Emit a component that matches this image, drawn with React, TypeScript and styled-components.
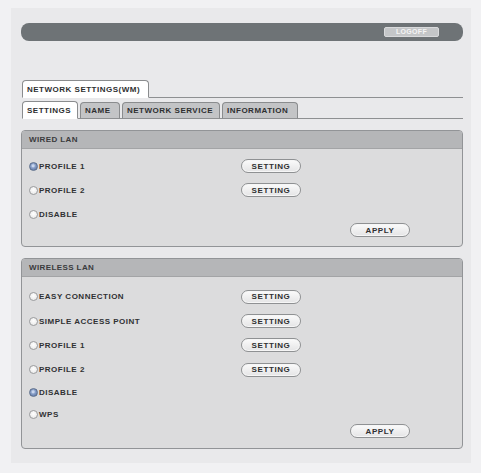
import React, { useState } from 'react'
import styled, { createGlobalStyle } from 'styled-components'

const GlobalStyle = createGlobalStyle`
  html, body {
    margin: 0;
    padding: 0;
    background: #f1f1f3;
  }
  body {
    font-family: "Liberation Sans", Arial, sans-serif;
  }
`

const Frame = styled.div`
  box-sizing: border-box;
  width: 481px;
  height: 473px;
  padding: 8px 10px 10px 11px;
`

const Page = styled.div`
  box-sizing: border-box;
  height: 100%;
  background: #e9e9eb;
  padding: 15px 8px 0 10px;
`

const TopBar = styled.div`
  height: 18px;
  border-radius: 8px;
  background: #6e7376;
  display: flex;
  align-items: center;
  justify-content: flex-end;
  padding-right: 24px;
`

const LogoffButton = styled.button`
  width: 55px;
  height: 10px;
  border: 1px solid #d9dadc;
  border-radius: 2px;
  background: #c4c6c8;
  color: #f4f4f4;
  font: bold 7px "Liberation Sans", Arial, sans-serif;
  letter-spacing: 0.3px;
  padding: 0;
  line-height: 8px;
`

const TabRow = styled.div<{ $top: number }>`
  display: flex;
  align-items: flex-end;
  margin-top: ${(p) => p.$top}px;
  margin-left: 1px;
  border-bottom: 1px solid #8e9092;
  height: 18px;
`

const Tab = styled.div<{ $active?: boolean; $width: number }>`
  box-sizing: border-box;
  width: ${(p) => p.$width}px;
  height: ${(p) => (p.$active ? 18 : 17)}px;
  margin-right: 2px;
  margin-bottom: -1px;
  border: 1px solid #8a8c8e;
  border-bottom: ${(p) => (p.$active ? '1px solid #ffffff' : '1px solid #8e9092')};
  border-radius: 4px 4px 0 0;
  background: ${(p) => (p.$active ? '#ffffff' : '#c3c4c6')};
  color: #2e2f31;
  font-size: 8px;
  font-weight: bold;
  letter-spacing: 0.5px;
  display: flex;
  align-items: center;
  padding-left: 4px;
  white-space: nowrap;
  overflow: hidden;
`

const Panel = styled.div<{ $top: number; $height: number }>`
  box-sizing: border-box;
  margin-top: ${(p) => p.$top}px;
  height: ${(p) => p.$height}px;
  border: 1px solid #929497;
  border-radius: 4px;
  background: #dcdcdd;
  overflow: hidden;
  display: flex;
  flex-direction: column;
`

const PanelHeader = styled.div`
  height: 17px;
  background: #b5b6b8;
  border-bottom: 1px solid #a3a4a6;
  color: #3a3b3d;
  font-size: 8px;
  font-weight: bold;
  letter-spacing: 0.4px;
  display: flex;
  align-items: center;
  padding-left: 7px;
`

const PanelBody = styled.div<{ $pad: number }>`
  position: relative;
  flex: 1;
  padding-top: ${(p) => p.$pad}px;
`

const OptionRow = styled.div<{ $height: number }>`
  display: grid;
  grid-template-columns: 212px 60px;
  align-items: center;
  height: ${(p) => p.$height}px;
  padding-left: 7px;
`

const RadioLabel = styled.label`
  display: flex;
  align-items: center;
  gap: 1px;
  color: #303133;
  font-size: 8px;
  font-weight: bold;
  letter-spacing: 0.5px;
  white-space: nowrap;
  cursor: pointer;
`

const RadioDot = styled.span<{ $checked: boolean }>`
  box-sizing: border-box;
  width: 9px;
  height: 9px;
  border-radius: 50%;
  border: 1px solid ${(p) => (p.$checked ? '#5d6f8c' : '#9a9b9d')};
  background: ${(p) =>
    p.$checked
      ? 'radial-gradient(circle at 45% 40%, #c9d6ee 0 1px, #8ea4cb 2px, #6a82b0 4px)'
      : 'radial-gradient(circle at 50% 40%, #ffffff, #e4e4e4)'};
  display: inline-block;
`

const PillButton = styled.button<{ $width?: number }>`
  box-sizing: border-box;
  width: ${(p) => p.$width ?? 60}px;
  height: 14px;
  border: 1px solid #8f9193;
  border-radius: 7px;
  background: linear-gradient(#fbfbfb, #e4e4e5);
  box-shadow: inset 0 0 0 1px #f6f6f6;
  color: #2f3032;
  font: bold 8px "Liberation Sans", Arial, sans-serif;
  letter-spacing: 0.6px;
  padding: 0;
  cursor: pointer;
`

const ApplyWrap = styled.div<{ $bottom: number }>`
  position: absolute;
  right: 52px;
  bottom: ${(p) => p.$bottom}px;
`

type Option = { label: string; setting?: boolean; rowHeight: number }

const wiredOptions: Option[] = [
  { label: 'PROFILE 1', setting: true, rowHeight: 24 },
  { label: 'PROFILE 2', setting: true, rowHeight: 24 },
  { label: 'DISABLE', rowHeight: 24 },
]

const wirelessOptions: Option[] = [
  { label: 'EASY CONNECTION', setting: true, rowHeight: 25 },
  { label: 'SIMPLE ACCESS POINT', setting: true, rowHeight: 24 },
  { label: 'PROFILE 1', setting: true, rowHeight: 24 },
  { label: 'PROFILE 2', setting: true, rowHeight: 25 },
  { label: 'DISABLE', rowHeight: 21 },
  { label: 'WPS', rowHeight: 22 },
]

interface LanPanelProps {
  title: string
  options: Option[]
  initial: string
  top: number
  height: number
  bodyPad: number
  applyBottom: number
}

const LanPanel: React.FC<LanPanelProps> = ({
  title,
  options,
  initial,
  top,
  height,
  bodyPad,
  applyBottom,
}) => {
  const [selected, setSelected] = useState(initial)
  return (
    <Panel $top={top} $height={height}>
      <PanelHeader>{title}</PanelHeader>
      <PanelBody $pad={bodyPad}>
        {options.map((o) => (
          <OptionRow key={o.label} $height={o.rowHeight}>
            <RadioLabel onClick={() => setSelected(o.label)}>
              <RadioDot $checked={selected === o.label} />
              {o.label}
            </RadioLabel>
            {o.setting && <PillButton>SETTING</PillButton>}
          </OptionRow>
        ))}
        <ApplyWrap $bottom={applyBottom}>
          <PillButton $width={60}>APPLY</PillButton>
        </ApplyWrap>
      </PanelBody>
    </Panel>
  )
}

const tabs = [
  { label: 'SETTINGS', width: 56, active: true },
  { label: 'NAME', width: 40 },
  { label: 'NETWORK SERVICE', width: 98 },
  { label: 'INFORMATION', width: 76 },
]

const App: React.FC = () => {
  return (
    <>
      <GlobalStyle />
      <Frame>
        <Page>
          <TopBar>
            <LogoffButton>LOGOFF</LogoffButton>
          </TopBar>
          <TabRow $top={38}>
            <Tab $active $width={127}>
              NETWORK SETTINGS(WM)
            </Tab>
          </TabRow>
          <TabRow $top={2}>
            {tabs.map((t) => (
              <Tab key={t.label} $active={t.active} $width={t.width}>
                {t.label}
              </Tab>
            ))}
          </TabRow>
          <LanPanel
            title="WIRED LAN"
            options={wiredOptions}
            initial="PROFILE 1"
            top={11}
            height={117}
            bodyPad={5}
            applyBottom={9}
          />
          <LanPanel
            title="WIRELESS LAN"
            options={wirelessOptions}
            initial="DISABLE"
            top={11}
            height={191}
            bodyPad={7}
            applyBottom={10}
          />
        </Page>
      </Frame>
    </>
  )
}

export default App
